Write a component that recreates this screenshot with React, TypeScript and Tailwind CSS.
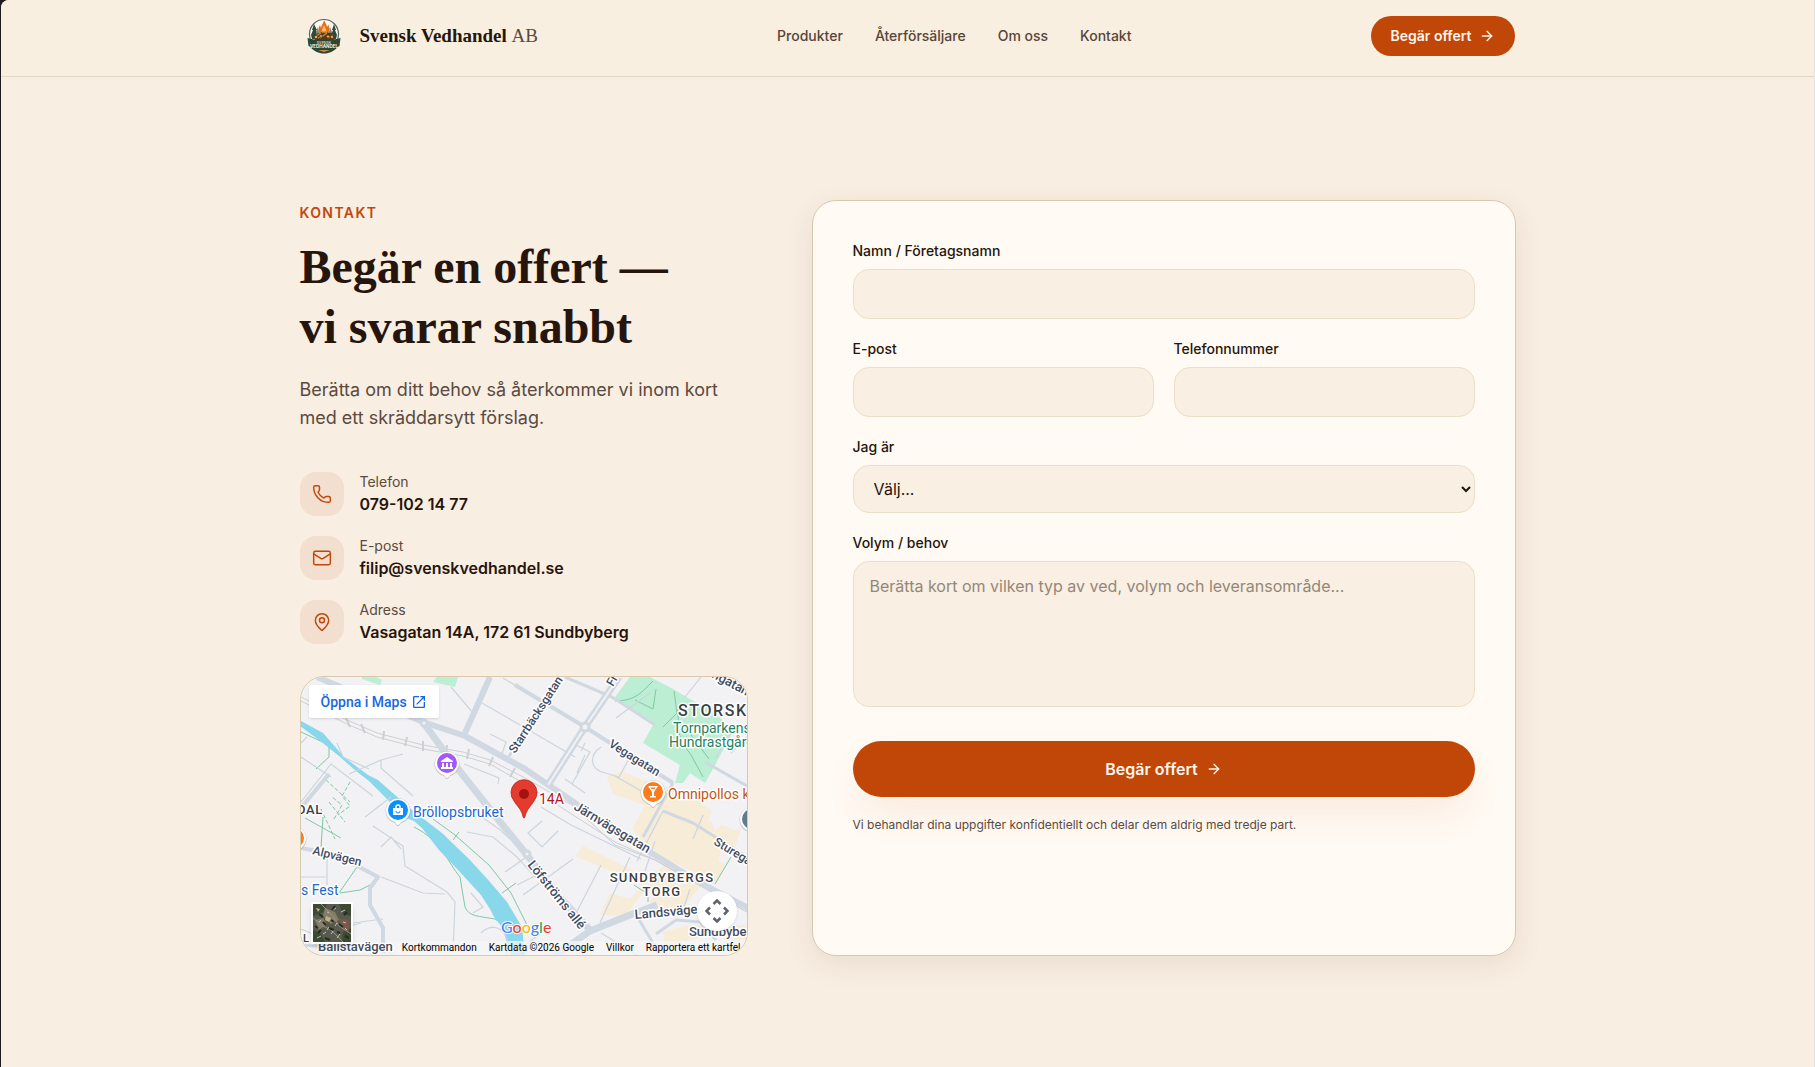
import { useId } from "react";
import type { ReactNode } from "react";
import { ArrowRight, Mail, MapPin, Phone } from "lucide-react";
import type { LucideIcon } from "lucide-react";
import { MdOpenInNew } from "react-icons/md";

const navLinks = ["Produkter", "Återförsäljare", "Om oss", "Kontakt"];

const contactItems: { icon: LucideIcon; label: string; value: string; href: string }[] = [
  { icon: Phone, label: "Telefon", value: "079-102 14 77", href: "tel:0791021477" },
  { icon: Mail, label: "E-post", value: "filip@svenskvedhandel.se", href: "mailto:filip@svenskvedhandel.se" },
  { icon: MapPin, label: "Adress", value: "Vasagatan 14A, 172 61 Sundbyberg", href: "#karta" },
];

const fieldClass =
  "block w-full rounded-2xl border border-[#ebdfc9] bg-[#f9efe3] px-4 text-base text-[#26150c] outline-none focus:border-[#c2470a]";

function Logo() {
  return (
    <svg viewBox="0 1 48 40" className="h-10 w-12" aria-hidden="true">
      <circle cx="24" cy="19" r="14.500" fill="#fdf9f0" stroke="#56655a" strokeWidth="1.200" />
      <path d="M14 9l-2 6h1l-2 5 1 4h6l-1-4h1l-2-5h1zM34 9l-2 6h1l-2 5h1l-1 4h5l1-4-2-5h1z" fill="#2f4a3a" />
      <path d="M18 12l-2 5 1 5h3zM30 12l-2 10h3l1-5z" fill="#7c8d7e" />
      <path d="M24 5c1 3 3 5 3 7 1-1 1-2 1-3 2 4 2 8-1 10h-6c-3-2-3-6-1-9l1 3c0-3 3-5 3-8z" fill="#e8691b" />
      <path d="M24 10c1 3 3 4 2 8h-4c-1-3 1-5 2-8z" fill="#fbc25a" />
      <path d="M14 22l4-4 6-1 8 1 3 5-1 3H15z" fill="#5a3717" />
      <path d="M16 21l5-3M20 23l7-5M28 23l5-3M22 17h5M18 23l3-2" stroke="#c88a43" strokeWidth="1.400" />
      <g fill="#e0ad68" stroke="#3d2611" strokeWidth=".6">
        <circle cx="16" cy="22" r="1.700" />
        <circle cx="21" cy="21" r="1.500" />
        <circle cx="28" cy="21.500" r="1.600" />
        <circle cx="32" cy="22" r="1.600" />
      </g>
      <path d="M7.500 23c10 3 23 3 33 0l-1 8-2 1c-3 4-8 6.500-13.500 6.500S13.500 36 10.500 32l-2-1z" fill="#2c4636" />
      <path d="M18 35h12l-6 2z" fill="#c88a43" />
      <text x="24" y="28.500" textAnchor="middle" fontSize="3.500" fontWeight="600" fontFamily="Inter, sans-serif" fill="#d5d8c8">
        SVENSK
      </text>
      <text x="24" y="33" textAnchor="middle" fontSize="4.500" fontWeight="700" fontFamily="Inter, sans-serif" fill="#f4f2e6">
        VEDHANDEL
      </text>
    </svg>
  );
}

function Header() {
  return (
    <header className="border-b border-[#e3d6c3] bg-[#f9efe0]">
      <div className="mx-auto flex max-w-7xl items-center justify-between px-8 pt-4 pb-5">
        <a href="#" className="flex items-center gap-3">
          <Logo />
          <span className="font-['Liberation_Serif',serif] text-[19px] leading-7 font-bold text-[#26150c]">
            Svensk Vedhandel <span className="font-normal text-[#5a4a3f]">AB</span>
          </span>
        </a>
        <nav className="flex items-center gap-8">
          {navLinks.map((link) => (
            <a key={link} href="#" className="text-sm font-medium text-[#564539] hover:text-[#26150c]">
              {link}
            </a>
          ))}
        </nav>
        <a
          href="#kontakt"
          className="flex h-10 items-center gap-2 rounded-full bg-[#c04708] px-5 text-sm font-semibold text-[#fff5ea] hover:bg-[#a83d06]"
        >
          Begär offert
          <ArrowRight className="size-4" />
        </a>
      </div>
    </header>
  );
}

function Pin({ x, y, color, children }: { x: number; y: number; color: string; children?: ReactNode }) {
  return (
    <g transform={`translate(${x} ${y})`}>
      <path d="M0 16c-1 0-2-1-3-3A12.500 12.500 0 1 1 3 13c-1 2-2 3-3 3z" fill="#8a8f94" opacity=".5" />
      <path d="M0 15c-1 0-2-1-3-3A12 12 0 1 1 3 12c-1 2-2 3-3 3z" fill="#fff" />
      <circle r="10" fill={color} />
      {children}
    </g>
  );
}

function MapDrawing() {
  return (
    <svg viewBox="0 0 446 278" preserveAspectRatio="xMidYMid slice" className="size-full" aria-hidden="true">
      <rect width="446" height="278" fill="#f2f1f3" />

      {/* Built-up areas */}
      <g fill="#f7ecd7">
        <path d="M306 100l15-6 21 9 19 5 30 12 20 14-7 18-24-7-42-19-26-9z" />
        <path d="M344 128l46 6 20 10 4 9 7-5 12 5 7-1-6 18-10-3-7 16 8 5-9 18-76-36-8-20z" />
        <path d="M282 169l-8 10 50 21 22 11-16 20-4 8-27-1 10-22 20 6 26-28 10-6 38 17-22 27-34 2 6-20-24-22z" />
        <path d="M362 255l25-7h59v16l-36-6-29 7-16 8z" />
      </g>

      {/* Parks */}
      <g fill="#bbeed2">
        <path d="M329 0h20l23 12 22 13 20 10 18 20-18 33-10 18-15-10-7 10h-8l5-18-37-22 10-18-18-12-20-16z" />
        <path d="M61 0h14l6 3-2 5-18-6zM136 0h21l-3 10-22-5z" />
      </g>
      <g fill="none" stroke="#7fc8a4" strokeWidth="1">
        <path d="M314 24c20 0 26-8 38-20M334 23l18 9 3-20M362 50l14-14-3-22M376 32c4 20-4 22 14 46l12 22M384 50l24 32" />
        <path d="M15 92l13-12v-12L0 55" />
        <path
          d="M25 103l24 22M49 105l-8 14 8 10-12 9M33 142l8-14-10-8M20 132l14 30M28 125l16 20"
          strokeDasharray="4 2"
        />
        <path d="M4 141l36 20M22 140l-2 30M56 190l-18 26M39 216l20-3 12-6M113 150c28 14 34 36 46 50l5 30c4 10 14 9 30 12l12 8M132 142l22 16 34 30 22 28 16 32M152 163l6-8M201 216l14-10M333 208l14 9v8M430 180l-16 27" />
      </g>

      {/* River */}
      <path
        d="M0 44l22 12 22 25 23 17 10 5 34 30 30 23 28 27 20 22 17 20 15 25 3 28h-14l-9-28-8-10-4-8-9-14-22-24-20-21-17-22-8-7-8-3-22-22-15-15-13-10-17-15-20-16-19-14z"
        fill="#88d7eb"
      />

      {/* Minor streets */}
      <g fill="none" stroke="#ccd5de" strokeWidth="1.200">
        <path d="M36 66l6 14 26 12M48 97l32-14 22-6M80 83v8l32 28M163 87l35 14-1 6M0 125l30-38 42 32M0 80l30 20M0 66l6-6M90 120l-26 20" />
        <path d="M189 57l16 8-4 12M150 10l22 26M172 36l10-26M202 1l22 13 60 36M181 26l33 19 60 35M349 16l-34 25M271 66l18 9-18 32M276 96l8-18M284 66l-4 8M264 102l20 14" />
        <path d="M300 70c-12 8-12 22 4 26l14 4 10-18M314 99l28 16 8 12M362 134l-26 50M402 138l-10 24M430 76l16-16M384 20l16-20M432 52l-18 30" />
        <path d="M72 149l30 20 2 20 42 26 8 10-2 50M80 200l42 16 22 1M80 170l10-10 10 12M52 246l30-4M170 216l12 14-10 6M178 138l20 14 22 20M166 155l26 5 24 20 20 22M204 195l20-14M216 208l20-10M240 130l30 18 70 34M241 144l-14 12 14 14 16-16M272 182l-50 36M300 188l-28 54M329 180l-30 66M300 256l36 22M354 164l-10 30M240 256l-26 20M389 212l-6 18M180 256c10-10 22-6 26 6v16" />
        <path d="M26 178v30M0 200h26M36 178l-10-2M0 252l36 14M60 246l-22 6" />
      </g>
      <g fill="none" stroke="#cdcfd2" strokeWidth="1">
        <path d="M0 20l46 23 30 13 46 12 40 7 27 8 35 18 47 27 43 40 40 15 92 52" />
        <path d="M0 24l46 23 30 13 46 12 40 7 27 8 35 20 90 58 40 18 92 52" />
        <path d="M45 41l4 9M60 47l4 9M83 54l-1 9M106 60l-2 9M122 64v10M146 68l-1 10M168 72l-2 10M192 80l-4 9M214 91l-5 9" strokeWidth="2" />
      </g>

      {/* Main streets */}
      <g fill="none" stroke="#d0d8e1" strokeLinejoin="round">
        <path d="M16 0l106 45 42 14 60 33 50 34 73 48 54 33 50 26" strokeWidth="6" />
        <path d="M122 45l24 33 46 58 34 42 28 37 35 38" strokeWidth="7" />
        <path d="M252 280l37-26 45-18 22-8" strokeWidth="7" />
        <path d="M189 0l-25 56" strokeWidth="6" />
        <path d="M214 8l70 42 88 56" strokeWidth="4" />
        <path d="M0 131l28-34" strokeWidth="4" />
        <path d="M0 171l36 7 41 22-8 11v17l13 23v25" strokeWidth="4" />
        <path d="M318 0l-34 50-37 58" strokeWidth="7" />
        <path d="M0 268l90 6M334 236l24 40M355 257l20-14 24 2 16 18" strokeWidth="3" />
        <path d="M259 0l-52 81M264 0l47 20M311 20l43 28M404 85l42 24M372 106l-30 54M362 134l30 12 54 34" strokeWidth="3" />
      </g>
      <path d="M318 0l-34 50-37 58" fill="none" stroke="#f2f1f3" strokeWidth="2" />
      <g fill="#f2f1f3" stroke="#d0d8e1" strokeWidth="3">
        <circle cx="284" cy="50" r="4" />
        <circle cx="226" cy="177" r="3" />
        <circle cx="123" cy="46" r="3" />
      </g>

      {/* Street names */}
      <g
        fontFamily="Roboto, sans-serif"
        fontWeight="500"
        fill="#3f4c62"
        stroke="#fff"
        strokeWidth="3"
        strokeLinejoin="round"
        paintOrder="stroke"
      >
        <text transform="translate(214 77) rotate(-57)" fontSize="12">Starrbäcksgatan</text>
        <text transform="translate(307 69) rotate(32)" fontSize="12">Vegagatan</text>
        <text transform="translate(272 132) rotate(31)" fontSize="13">Järnvägsgatan</text>
        <text transform="translate(226 188) rotate(51)" fontSize="13">Löfströms allé</text>
        <text transform="translate(334 242) rotate(-5)" fontSize="13">Landsvägen</text>
        <text transform="translate(412 167) rotate(31)" fontSize="12">Sturegatan</text>
        <text transform="translate(11 177) rotate(14)" fontSize="12">Alpvägen</text>
        <text transform="translate(312 10) rotate(-60)" fontSize="12">Fr</text>
        <text transform="translate(410 0) rotate(28)" fontSize="13">ngatan</text>
        <text x="388" y="259" fontSize="13">Sundbyberg</text>
        <text x="17" y="274" fontSize="13">Ballstavägen</text>
      </g>
      <g
        fontFamily="Roboto, sans-serif"
        fontWeight="500"
        fill="#3c4043"
        stroke="#fff"
        strokeWidth="3"
        strokeLinejoin="round"
        paintOrder="stroke"
      >
        <text x="377" y="39" fontSize="16" className="tracking-widest">STORSK</text>
        <text x="361" y="205" fontSize="13" textAnchor="middle" className="tracking-widest">SUNDBYBERGS</text>
        <text x="361" y="219" fontSize="13" textAnchor="middle" className="tracking-widest">TORG</text>
        <text x="-4" y="137" fontSize="13" className="tracking-wider">DAL</text>
        <text x="2" y="265" fontSize="11">L</text>
      </g>

      {/* Places */}
      <g
        fontFamily="Roboto, sans-serif"
        fontSize="14"
        stroke="#fff"
        strokeWidth="3"
        strokeLinejoin="round"
        paintOrder="stroke"
      >
        <text x="372" y="56" fill="#1d8260">Tornparkens</text>
        <text x="368" y="70" fill="#1d8260">Hundrastgård</text>
        <text x="367" y="122" fill="#c4560c">Omnipollos kyrka</text>
        <text x="238" y="127" fill="#b3141c">14A</text>
        <text x="112" y="140" fill="#1967d2">Bröllopsbruket</text>
        <text x="0" y="218" fill="#1967d2">s Fest</text>
      </g>

      <Pin x={146} y={86} color="#a259f7">
        <path d="M-6-2l6-4 6 4v1H-6zM-5 0h2v4h-2zM-1 0h2v4h-2zM3 0h2v4H3zM-6 4H6v2H-6z" fill="#fff" />
      </Pin>
      <Pin x={97} y={133} color="#0a8ffb">
        <path d="M-5-2H5v7H-5z" fill="#fff" />
        <path d="M-2-2v-1a2 2 0 0 1 4 0v1" fill="none" stroke="#fff" strokeWidth="1.500" />
        <path d="M-2 1a2 2 0 0 0 4 0" fill="none" stroke="#0a8ffb" />
      </Pin>
      <Pin x={352} y={115} color="#fb7b1d">
        <path d="M-5-6H5L1 0v4h2v1.500h-6V4h2V0z" fill="#fff" />
        <path d="M-2.500-4.500h5L1.500-3h-3z" fill="#fb7b1d" />
      </Pin>
      <Pin x={-7} y={161} color="#fb7b1d" />
      <Pin x={451} y={142} color="#5f7d8c" />
      <path
        d="M223 141c-1 0-1-2-2-5-2-5-5-7-8-12a13 13 0 1 1 20 0c-3 5-6 7-8 12-1 3-1 5-2 5z"
        fill="#e53a2e"
        stroke="#b7231c"
        strokeWidth=".8"
      />
      <circle cx="223" cy="117" r="5" fill="#a5120f" />

      <text
        x="200"
        y="256"
        fontFamily="Lato, sans-serif"
        fontSize="16"
        fontWeight="500"
        stroke="#fff"
        strokeWidth="2"
        paintOrder="stroke"
      >
        <tspan fill="#4285f4">G</tspan>
        <tspan fill="#ea4335">o</tspan>
        <tspan fill="#fbbc04">o</tspan>
        <tspan fill="#4285f4">g</tspan>
        <tspan fill="#34a853">l</tspan>
        <tspan fill="#ea4335">e</tspan>
      </text>
    </svg>
  );
}

function SatelliteThumb() {
  return (
    <svg viewBox="0 0 38 38" className="size-full" aria-hidden="true">
      <rect width="38" height="38" fill="#575a4c" />
      <path d="M0 0h14l-4 8-10 4zM26 0h12v12l-8-2zM0 26l8 4 4 8H0zM30 28l8-4v14h-9z" fill="#3d4a33" />
      <path d="M12 4l10 4 4 8-8 4-8-8zM2 16l8-2 4 6-8 6z" fill="#857c66" />
      <path d="M26 14l10 2v12l-8-4z" fill="#7a574b" />
      <path d="M13 12l5 2-2 4-4-2zM3 4l4 1-2 3z" fill="#c2ad8c" />
      <path d="M0 14l10 8 8 4 12 12M8 0l12 12 6 10 12 8" stroke="#8f9189" strokeWidth="1" fill="none" />
      <path
        d="M14 26l2-3M18 30l3-4M24 34l3-4M10 30l3-2M20 6l3-2M28 8l4-2M4 34l4-2M6 18l2-2M30 18l3 1M22 22l2-3M14 8l2 1M32 24l2 2"
        stroke="#c9c3b5"
        strokeWidth="1"
      />
      <path
        d="M16 24l5 2M26 20l4 3M22 2l-3 4M6 10l4 3M32 32l4 2M12 34l5 2M10 18l3 3M18 16l3 2M34 8l-3 3M2 22l3 2M24 28l3 1M8 26l-3 3"
        stroke="#262b22"
        strokeWidth="2"
      />
    </svg>
  );
}

function ContactMap() {
  return (
    <div
      id="karta"
      className="relative mt-8 h-[280px] overflow-hidden rounded-3xl border border-[#d8c9ae] font-[Roboto,sans-serif]"
    >
      <MapDrawing />
      <a
        href="#karta"
        className="absolute top-2 left-2 flex h-[33px] items-center gap-1 rounded-xs bg-white px-3 text-sm font-medium text-[#1a66e0] shadow"
      >
        Öppna i Maps
        <MdOpenInNew className="size-4" />
      </a>
      <button
        type="button"
        aria-label="Satellit"
        className="absolute bottom-[11px] left-2.5 size-[42px] rounded-xs border-2 border-white shadow-md"
      >
        <SatelliteThumb />
      </button>
      <button
        type="button"
        aria-label="Kamerakontroller"
        className="absolute right-2.5 bottom-6 flex size-10 items-center justify-center rounded-full bg-white shadow"
      >
        <svg viewBox="0 0 24 24" className="size-6" fill="none" stroke="#5f6368" strokeWidth="2.500" aria-hidden="true">
          <path d="M8.500 5L12 1.500 15.500 5M8.500 19l3.500 3.500 3.500-3.500M5 8.500L1.500 12 5 15.500M19 8.500l3.500 3.500-3.500 3.500" />
        </svg>
      </button>
      <div className="absolute right-0 bottom-0 flex h-3.5 items-center gap-3 bg-[#f5f5f5]/75 pr-1.5 pl-2 text-[10px] leading-3.5 whitespace-nowrap text-black">
        <button type="button">Kortkommandon</button>
        <span>Kartdata ©2026 Google</span>
        <a href="#karta">Villkor</a>
        <a href="#karta">Rapportera ett kartfel</a>
      </div>
    </div>
  );
}

function ContactInfo() {
  return (
    <div className="col-span-2">
      <p className="text-sm leading-[26px] font-semibold tracking-widest text-[#c2470a] uppercase">Kontakt</p>
      <h1 className="mt-[11px] font-['Liberation_Serif',serif] text-5xl leading-[60px] font-bold text-[#26150c]">
        Begär en offert —
        <br />
        vi svarar snabbt
      </h1>
      <p className="mt-[19px] text-lg leading-7 text-[#5a4a3f]">
        Berätta om ditt behov så återkommer vi inom kort med ett skräddarsytt förslag.
      </p>
      <ul className="mt-10 flex flex-col gap-5">
        {contactItems.map(({ icon: Icon, label, value, href }) => (
          <li key={label} className="flex items-center gap-4">
            <span className="flex size-11 items-center justify-center rounded-2xl bg-[#f3dfcf] text-[#c2470a]">
              <Icon className="size-5" strokeWidth={1.75} />
            </span>
            <div>
              <p className="text-sm text-[#5a4a3f]">{label}</p>
              <a href={href} className="block text-base font-semibold text-[#26150c]">
                {value}
              </a>
            </div>
          </li>
        ))}
      </ul>
      <ContactMap />
    </div>
  );
}

function Field({ id, label, children }: { id: string; label: string; children: ReactNode }) {
  return (
    <div>
      <label htmlFor={id} className="mb-2 block text-sm font-medium text-[#26150c]">
        {label}
      </label>
      {children}
    </div>
  );
}

function ContactForm() {
  const id = useId();

  return (
    <form
      id="kontakt"
      className="col-span-3 rounded-3xl border border-[#d8c9ae] bg-[#fffaf3] p-10 shadow-[0_8px_30px_rgba(60,45,10,0.09)]"
      onSubmit={(e) => e.preventDefault()}
    >
      <div className="flex flex-col gap-5">
        <Field id={`${id}-name`} label="Namn / Företagsnamn">
          <input id={`${id}-name`} type="text" className={`${fieldClass} h-[50px]`} />
        </Field>
        <div className="grid grid-cols-2 gap-5">
          <Field id={`${id}-email`} label="E-post">
            <input id={`${id}-email`} type="email" className={`${fieldClass} h-[50px]`} />
          </Field>
          <Field id={`${id}-phone`} label="Telefonnummer">
            <input id={`${id}-phone`} type="tel" className={`${fieldClass} h-[50px]`} />
          </Field>
        </div>
        <Field id={`${id}-role`} label="Jag är">
          <select id={`${id}-role`} defaultValue="" className={`${fieldClass} h-12 pr-0`}>
            <option value="">Välj...</option>
            <option value="privat">Privatperson</option>
            <option value="foretag">Företag</option>
          </select>
        </Field>
        <Field id={`${id}-need`} label="Volym / behov">
          <textarea
            id={`${id}-need`}
            rows={5}
            placeholder="Berätta kort om vilken typ av ved, volym och leveransområde..."
            className={`${fieldClass} resize-none py-3 placeholder:text-[#948778]`}
          />
        </Field>
      </div>
      <button
        type="submit"
        className="mt-[34px] flex h-14 w-full items-center justify-center gap-2 rounded-full bg-[#c04708] text-base font-semibold text-[#fff5ea] shadow-[0_20px_40px_-8px_rgba(192,71,8,0.10)] hover:bg-[#a83d06]"
      >
        Begär offert
        <ArrowRight className="size-4" />
      </button>
      <p className="mt-5 text-xs text-[#5a4a3f]">
        Vi behandlar dina uppgifter konfidentiellt och delar dem aldrig med tredje part.
      </p>
    </form>
  );
}

export default function App() {
  return (
    <div className="border-r border-[#e6e2df] bg-[#1c1c1c] pl-px font-[Inter,sans-serif]">
      <div className="min-h-screen overflow-hidden rounded-tl-lg bg-[#f9eee2]">
        <Header />
        <main className="mx-auto grid max-w-7xl grid-cols-5 gap-16 px-8 pt-[123px] pb-[111px]">
          <ContactInfo />
          <ContactForm />
        </main>
      </div>
    </div>
  );
}
